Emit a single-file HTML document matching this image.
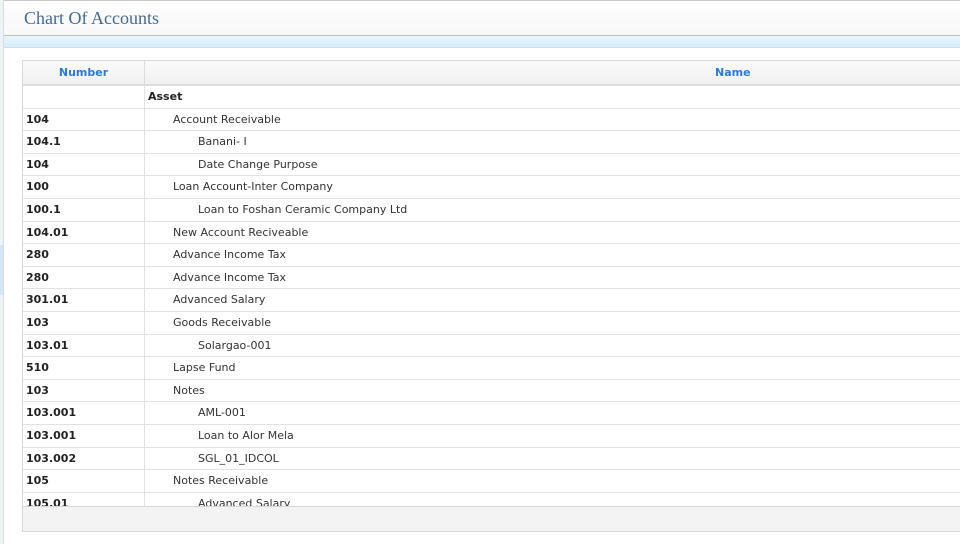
<!DOCTYPE html>
<html><head><style>
body{margin:0;width:960px;height:544px;overflow:hidden;background:#fff;font-family:"DejaVu Sans","Liberation Sans",sans-serif;position:relative}
.strip{position:absolute;left:0;top:0;width:3px;height:544px;background:#eef3f7;border-right:1px solid #d6dde3}
.strip2{position:absolute;left:0;top:245px;width:3px;height:50px;background:#d3e6f5}
.hdr{position:absolute;left:4px;top:0;right:0;height:34px;border-top:1px solid #c8c8c8;border-bottom:1px solid #bdbdbd;background:linear-gradient(#fff,#f7f7f7)}
.hdr h1{margin:0;position:absolute;left:20px;top:7px;font:18px "Liberation Serif",serif;color:#46698f;font-weight:normal}
.band{position:absolute;left:4px;right:0;top:36px;height:11px;background:linear-gradient(#e9f6fd,#d6eefb);border-bottom:1px solid #cfdde6}
.grid{position:absolute;left:22px;top:60px;width:950px;height:470px;border:1px solid #d8d8d8;border-right:none;overflow:hidden}
.th{position:relative;height:23px;border-bottom:2px solid #dcdcdc;background:linear-gradient(#fafafa,#f1f1f1);font-size:11px;color:#2a7be0;line-height:23px;font-weight:600}
.th .n{position:absolute;left:0;top:0;width:121px;height:23px;border-right:1px solid #dcdcdc;text-align:center}
.th .m{position:absolute;left:692px;top:0}
.body{height:421px;overflow:hidden}
.row{height:21.6px;border-bottom:1px solid #e2e2e2;display:flex;font-size:11px;line-height:22px;color:#333}
.c1{width:122px;border-right:1px solid #e2e2e2;padding-left:3px;box-sizing:border-box;color:#222;font-weight:600}
.c2{flex:1;padding-left:3px}
.foot{position:absolute;left:0;right:0;bottom:0;height:24px;border-top:1px solid #d8d8d8;background:#f3f3f3}
</style></head><body>
<div class="strip"></div><div class="strip2"></div>
<div class="hdr"><h1>Chart Of Accounts</h1></div>
<div class="band"></div>
<div class="grid">
<div class="th"><div class="n">Number</div><div class="m">Name</div></div>
<div class="body">
<div class="row"><div class="c1"></div><div class="c2" style="font-weight:600;color:#222">Asset</div></div>
<div class="row"><div class="c1">104</div><div class="c2" style="padding-left:28px">Account Receivable</div></div>
<div class="row"><div class="c1">104.1</div><div class="c2" style="padding-left:53px">Banani- I</div></div>
<div class="row"><div class="c1">104</div><div class="c2" style="padding-left:53px">Date Change Purpose</div></div>
<div class="row"><div class="c1">100</div><div class="c2" style="padding-left:28px">Loan Account-Inter Company</div></div>
<div class="row"><div class="c1">100.1</div><div class="c2" style="padding-left:53px">Loan to Foshan Ceramic Company Ltd</div></div>
<div class="row"><div class="c1">104.01</div><div class="c2" style="padding-left:28px">New Account Reciveable</div></div>
<div class="row"><div class="c1">280</div><div class="c2" style="padding-left:28px">Advance Income Tax</div></div>
<div class="row"><div class="c1">280</div><div class="c2" style="padding-left:28px">Advance Income Tax</div></div>
<div class="row"><div class="c1">301.01</div><div class="c2" style="padding-left:28px">Advanced Salary</div></div>
<div class="row"><div class="c1">103</div><div class="c2" style="padding-left:28px">Goods Receivable</div></div>
<div class="row"><div class="c1">103.01</div><div class="c2" style="padding-left:53px">Solargao-001</div></div>
<div class="row"><div class="c1">510</div><div class="c2" style="padding-left:28px">Lapse Fund</div></div>
<div class="row"><div class="c1">103</div><div class="c2" style="padding-left:28px">Notes</div></div>
<div class="row"><div class="c1">103.001</div><div class="c2" style="padding-left:53px">AML-001</div></div>
<div class="row"><div class="c1">103.001</div><div class="c2" style="padding-left:53px">Loan to Alor Mela</div></div>
<div class="row"><div class="c1">103.002</div><div class="c2" style="padding-left:53px">SGL_01_IDCOL</div></div>
<div class="row"><div class="c1">105</div><div class="c2" style="padding-left:28px">Notes Receivable</div></div>
<div class="row"><div class="c1">105.01</div><div class="c2" style="padding-left:53px">Advanced Salary</div></div>
</div>
<div class="foot"></div>
</div>
</body></html>
